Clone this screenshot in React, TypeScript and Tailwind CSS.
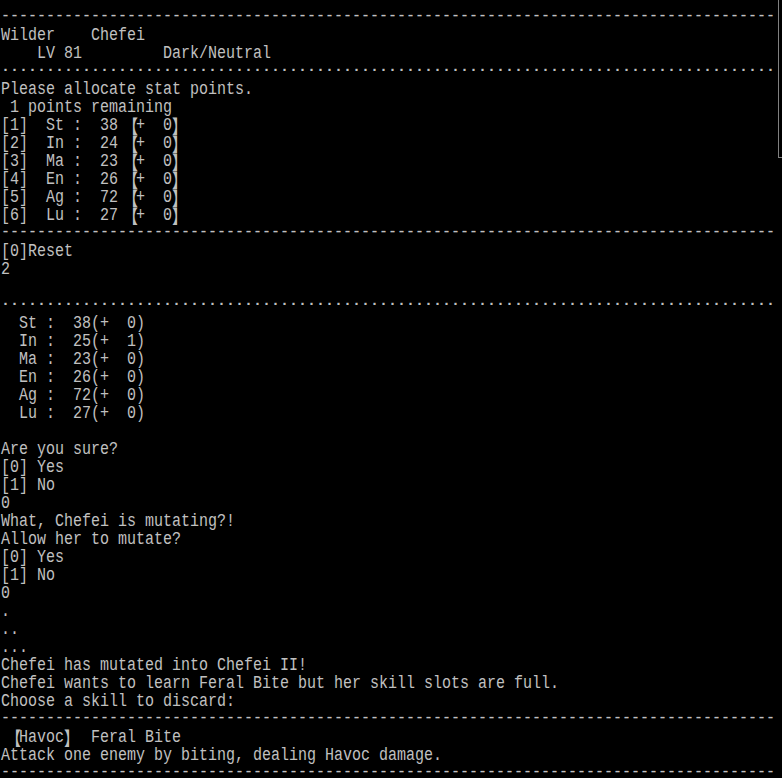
import React from "react";

const DASHES = "-".repeat(86);
const DOTS = "·".repeat(86);

const lines = [
  DASHES,
  "Wilder    Chefei",
  "    LV 81         Dark/Neutral",
  DOTS,
  "Please allocate stat points.",
  " 1 points remaining",
  "[1]  St :  38 【+  0】",
  "[2]  In :  24 【+  0】",
  "[3]  Ma :  23 【+  0】",
  "[4]  En :  26 【+  0】",
  "[5]  Ag :  72 【+  0】",
  "[6]  Lu :  27 【+  0】",
  DASHES,
  "[0]Reset",
  "2",
  "",
  DOTS,
  "  St :  38(+  0)",
  "  In :  25(+  1)",
  "  Ma :  23(+  0)",
  "  En :  26(+  0)",
  "  Ag :  72(+  0)",
  "  Lu :  27(+  0)",
  "",
  "Are you sure?",
  "[0] Yes",
  "[1] No",
  "0",
  "What, Chefei is mutating?!",
  "Allow her to mutate?",
  "[0] Yes",
  "[1] No",
  "0",
  ".",
  "..",
  "...",
  "Chefei has mutated into Chefei II!",
  "Chefei wants to learn Feral Bite but her skill slots are full.",
  "Choose a skill to discard:",
  DASHES,
  " 【Havoc】  Feral Bite",
  "Attack one enemy by biting, dealing Havoc damage.",
  DASHES,
];

// full-width lenticular brackets squeezed into one console cell
function Bracket({ ch }: { ch: string }) {
  const open = ch === "【";
  return (
    <span
      className={
        open
          ? "inline-block w-[9px] h-[18px] leading-[18px] align-top indent-[-4px] font-['Noto_Sans_CJK_JP',sans-serif]"
          : "inline-block w-[9px] h-[18px] leading-[18px] align-top font-['Noto_Sans_CJK_JP',sans-serif]"
      }
    >
      {ch}
    </span>
  );
}

function Line({ text }: { text: string }) {
  const parts = text.split(/([【】])/);
  let cls = "h-[18px] leading-[18px] whitespace-pre scale-y-125 translate-y-[1px]";
  if (text === DOTS) cls = "h-[18px] leading-[18px] whitespace-pre font-bold";
  if (text === DASHES) cls = "h-[18px] leading-[18px] whitespace-pre scale-y-125";
  return (
    <div className={cls}>
      {parts.map((p, i) =>
        p === "【" || p === "】" ? <Bracket key={i} ch={p} /> : <span key={i}>{p}</span>
      )}
    </div>
  );
}

export default function App() {
  return (
    <div className="relative w-[782px] h-[778px] overflow-hidden bg-black text-[#c0c0c0] font-['Liberation_Mono',monospace] text-[15px] pt-[8px] pl-[1px]">
      {lines.map((l, i) => (
        <Line key={i} text={l} />
      ))}

      {/* scrollbar thumb */}
      <div className="absolute top-0 right-0 w-[4px] h-[158px] border-l border-b border-[#808080]" />
    </div>
  );
}
